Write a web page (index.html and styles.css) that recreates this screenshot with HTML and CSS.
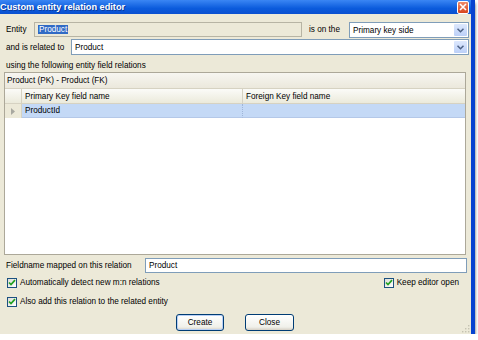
FILE: index.html
```html
<!DOCTYPE html>
<html lang="en">
<head>
<meta charset="UTF-8">
<title>Custom entity relation editor</title>
<link rel="stylesheet" href="styles.css">
</head>
<body>

<div class="window">
    <div class="titlebar">
        <span class="title">Custom entity relation editor</span>
        <span class="close">
            <svg width="8" height="8" viewBox="0 0 8 8"><path d="M1 1 L7 7 M7 1 L1 7" stroke="#fff" stroke-width="1.6"/></svg>
        </span>
    </div>

    <div class="row row-entity">
        <span class="label w-entity">Entity</span>
        <span class="textbox disabled w-entity-box"><span class="sel">Product</span></span>
        <span class="label w-side">is on the</span>
        <span class="combo w-side-combo">
            <span class="combo-text">Primary key side</span>
            <span class="drop"><svg width="7" height="5" viewBox="0 0 7 5"><path d="M0.5 0.8 L3.5 3.8 L6.5 0.8" fill="none" stroke="#4d6185" stroke-width="1.5"/></svg></span>
        </span>
    </div>

    <div class="row row-related">
        <span class="label w-related">and is related to</span>
        <span class="combo w-related-combo">
            <span class="combo-text">Product</span>
            <span class="drop"><svg width="7" height="5" viewBox="0 0 7 5"><path d="M0.5 0.8 L3.5 3.8 L6.5 0.8" fill="none" stroke="#4d6185" stroke-width="1.5"/></svg></span>
        </span>
    </div>

    <div class="caption">using the following entity field relations</div>

    <div class="grid">
        <div class="grid-caption">Product (PK) - Product (FK)</div>
        <div class="grid-head">
            <span class="rowhead"></span>
            <span class="col col-pk">Primary Key field name</span>
            <span class="col col-fk">Foreign Key field name</span>
        </div>
        <div class="grid-row">
            <span class="rowhead"><svg width="4" height="7" viewBox="0 0 4 7"><path d="M0 0 L4 3.5 L0 7 Z" fill="#a8a8a0"/></svg></span>
            <span class="cell col-pk">ProductId</span>
            <span class="cell col-fk"></span>
        </div>
    </div>

    <div class="row row-field">
        <span class="label w-field">Fieldname mapped on this relation</span>
        <span class="textbox w-field-box">Product</span>
    </div>

    <div class="row row-check1">
        <label class="check"><span class="box"><svg width="8" height="7" viewBox="0 0 8 7"><path d="M1 3.5 L3 5.5 L7 1.2" fill="none" stroke="#21a121" stroke-width="1.7"/></svg></span>Automatically detect new m:n relations</label>
        <label class="check keep"><span class="box"><svg width="8" height="7" viewBox="0 0 8 7"><path d="M1 3.5 L3 5.5 L7 1.2" fill="none" stroke="#21a121" stroke-width="1.7"/></svg></span>Keep editor open</label>
    </div>

    <div class="row row-check2">
        <label class="check"><span class="box"><svg width="8" height="7" viewBox="0 0 8 7"><path d="M1 3.5 L3 5.5 L7 1.2" fill="none" stroke="#21a121" stroke-width="1.7"/></svg></span>Also add this relation to the related entity</label>
    </div>

    <div class="buttons">
        <button class="btn btn-create">Create</button>
        <button class="btn btn-close">Close</button>
    </div>

    <svg class="grip" width="10" height="10" viewBox="0 0 10 10">
        <g fill="#c5c2b2">
            <rect x="8" y="2" width="1.4" height="1.4"/>
            <rect x="5" y="5" width="1.4" height="1.4"/>
            <rect x="8" y="5" width="1.4" height="1.4"/>
            <rect x="2" y="8" width="1.4" height="1.4"/>
            <rect x="5" y="8" width="1.4" height="1.4"/>
            <rect x="8" y="8" width="1.4" height="1.4"/>
        </g>
    </svg>
</div>

</body>
</html>
```

FILE: styles.css
```css
body {
    margin: 0;
    padding: 0;
    background-color: #fff;
    font-family: "Liberation Sans", Arial, sans-serif;
    font-size: 8.2px;
    color: #000;
}
.window {
    position: relative;
    width: 471px;
    height: 334px;
    background-color: #ece9d8;
    border-right: 4px solid #0843d0;
    box-shadow: 0 3px 3px rgba(0, 0, 0, 0.65);
}
.titlebar {
    height: 14px;
    display: flex;
    align-items: center;
    justify-content: space-between;
    padding: 0 2px 0 0;
    background: linear-gradient(#3a86f4, #0b5bdc 60%, #0a50d0);
    color: #fff;
}
.title {
    font-weight: bold;
    font-size: 9.2px;
    text-shadow: 1px 1px 0 #0a3a9c;
}
.close {
    width: 10px;
    height: 11px;
    display: flex;
    align-items: center;
    justify-content: center;
    background: linear-gradient(#ef8a6a, #d8441c);
    border: 1px solid #fff;
    border-radius: 2px;
}
.row {
    display: flex;
    align-items: center;
}
.label {
    display: inline-block;
    white-space: nowrap;
}
.textbox {
    display: flex;
    align-items: center;
    box-sizing: border-box;
    height: 15px;
    padding: 0 3px;
    background-color: #fff;
    border: 1px solid #7f9db9;
}
.textbox.disabled {
    background-color: #ece9d8;
    border-color: #b7b4a4;
}
.sel {
    background-color: #316ac5;
    color: #fff;
    padding: 0 1px;
}
.combo {
    display: flex;
    align-items: center;
    justify-content: space-between;
    box-sizing: border-box;
    height: 16px;
    padding: 0 1px 0 3px;
    background-color: #fff;
    border: 1px solid #7f9db9;
}
.drop {
    width: 13px;
    height: 12px;
    display: flex;
    align-items: center;
    justify-content: center;
    background: linear-gradient(#dde8fd, #bcd0f8);
    border-radius: 1px;
}
.row-entity {
    margin-top: 7px;
    height: 16px;
}
.w-entity {
    margin-left: 6px;
    width: 28px;
}
.w-entity-box {
    width: 268px;
}
.w-side {
    margin-left: 7px;
    width: 40px;
}
.w-side-combo {
    width: 120px;
    margin-top: 2px;
}
.row-related {
    margin-top: 2px;
    height: 16px;
}
.w-related {
    margin-left: 6px;
    width: 65px;
}
.w-related-combo {
    width: 398px;
}
.caption {
    margin: 5px 0 0 6px;
    height: 11px;
    line-height: 11px;
}
.grid {
    margin: 1px 0 0 4px;
    width: 462px;
    height: 183px;
    box-sizing: border-box;
    background-color: #fff;
    border: 1px solid #aca899;
}
.grid-caption {
    height: 15px;
    line-height: 15px;
    padding-left: 2px;
    background: linear-gradient(#f7f6f1, #ebe8dc);
    border-bottom: 1px solid #d6d2c2;
}
.grid-head,
.grid-row {
    display: flex;
    height: 14px;
}
.grid-head {
    background: linear-gradient(#fbfbf8, #ebeadb);
    border-bottom: 1px solid #d6d2c2;
}
.rowhead {
    width: 16px;
    flex: none;
    display: flex;
    align-items: center;
    justify-content: center;
    background-color: #ece9d8;
    border-right: 1px solid #d6d2c2;
}
.grid-head .rowhead {
    background: linear-gradient(#fbfbf8, #ebeadb);
}
.col,
.cell {
    display: flex;
    align-items: center;
    padding-left: 3px;
    box-sizing: border-box;
}
.col-pk {
    width: 221px;
    border-right: 1px solid #d6d2c2;
}
.col-fk {
    flex: 1;
}
.grid-row .cell {
    background-color: #c4d9f6;
    border-bottom: 1px solid #b4c8e8;
}
.grid-row .col-pk {
    border-right: 1px dotted #9fb5d8;
}
.row-field {
    margin-top: 3px;
    height: 15px;
}
.w-field {
    margin-left: 6px;
    width: 139px;
}
.w-field-box {
    width: 322px;
}
.check {
    display: flex;
    align-items: center;
    white-space: nowrap;
}
.box {
    width: 10px;
    height: 10px;
    box-sizing: border-box;
    margin-right: 3px;
    display: flex;
    align-items: center;
    justify-content: center;
    background: linear-gradient(135deg, #dcdcd6, #fff);
    border: 1px solid #1c5180;
}
.row-check1 {
    margin-top: 4px;
    height: 11px;
    padding-left: 7px;
}
.keep {
    margin-left: auto;
    margin-right: 12px;
}
.row-check2 {
    margin-top: 8px;
    height: 11px;
    padding-left: 7px;
}
.buttons {
    margin-top: 7px;
    display: flex;
    justify-content: center;
    gap: 21px;
    padding-right: 1px;
}
.btn {
    height: 17px;
    padding: 0;
    font-family: "Liberation Sans", Arial, sans-serif;
    font-size: 8.2px;
    color: #000;
    background: linear-gradient(#fff, #f0f0ea 80%, #d6d0c5);
    border: 1px solid #003c74;
    border-radius: 3px;
    box-shadow: inset 0 0 0 1px #b8cff5;
}
.btn-create {
    width: 48px;
}
.btn-close {
    width: 49px;
    box-shadow: none;
}
.grip {
    position: absolute;
    right: 1px;
    bottom: 1px;
}
```
